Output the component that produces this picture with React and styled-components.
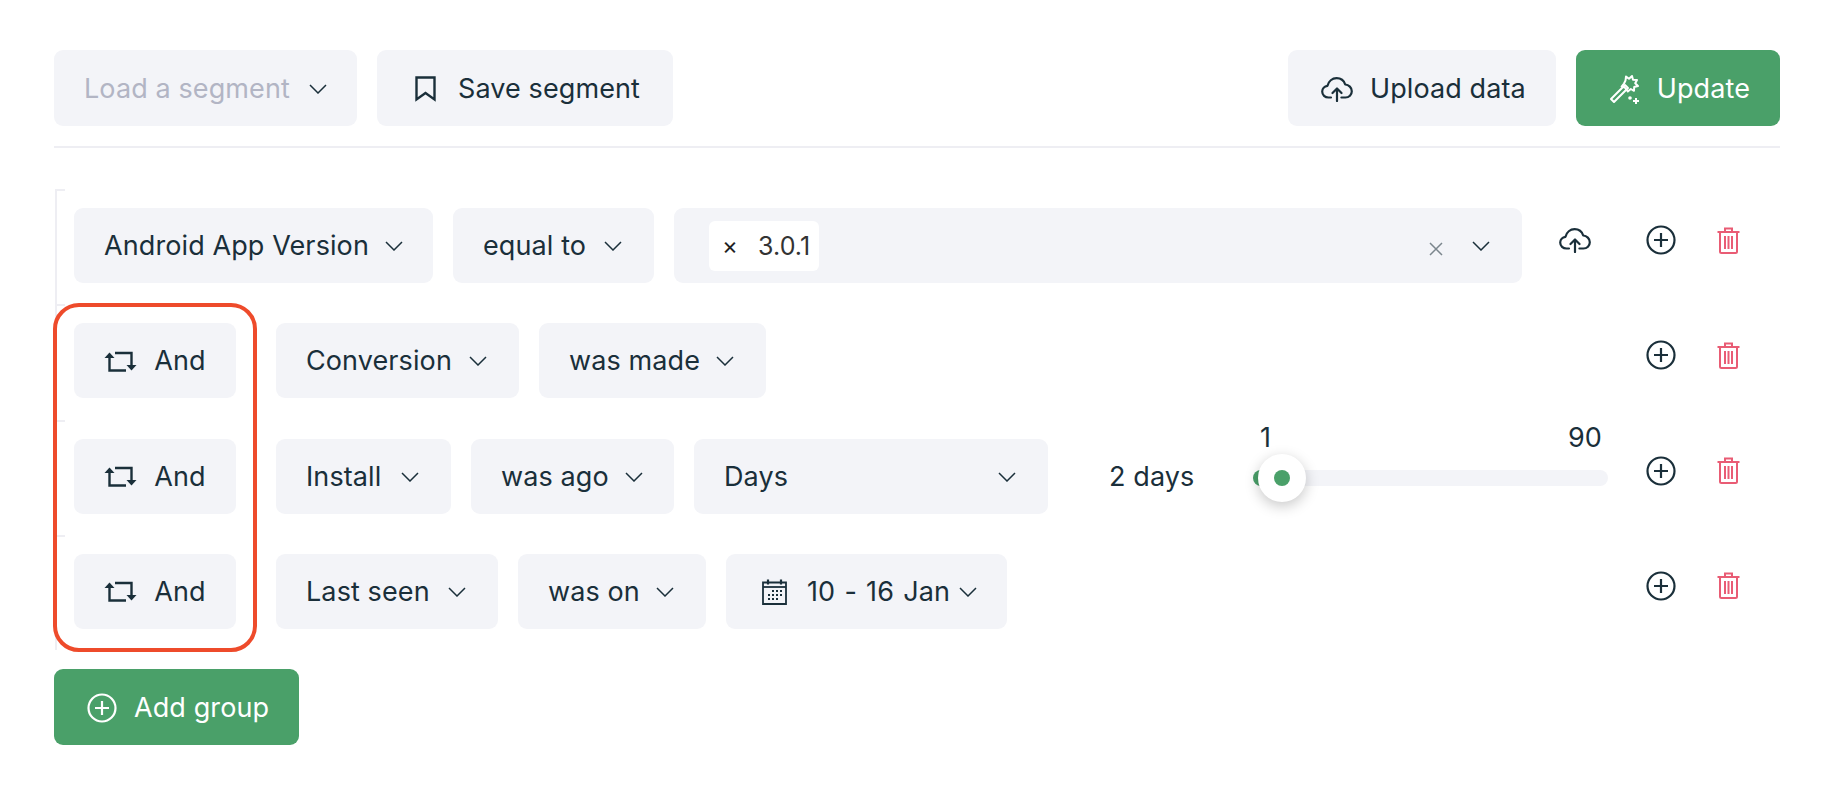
import styled, { createGlobalStyle } from "styled-components";

const ink = "#1a2f3a";
const soft = "#f3f4f8";
const green = "#4aa069";
const pink = "#e95c74";

const GlobalStyle = createGlobalStyle`
    body {
        margin: 0;
        background: #fff;
        font-family: 'Inter', 'Liberation Sans', sans-serif;
        color: ${ink};
    }
`

const Chevron = () => (
    <ChevronSvg viewBox="0 0 18 10" fill="none" stroke={ink} strokeWidth="1.5">
        <path d="M1 1l8 8 8-8" />
    </ChevronSvg>
)

const Bookmark = () => (
    <svg width="21" height="26" viewBox="0 0 21 26" fill="none" stroke="currentColor" strokeWidth="2.4">
        <path d="M1.5 1.5h18v22l-9-6.5-9 6.5z" />
    </svg>
)

const CloudUpload = () => (
    <svg width="32" height="25" viewBox="0 0 32 25" fill="none" stroke="currentColor" strokeWidth="2.2" strokeLinecap="round" strokeLinejoin="round">
        <path d="M10 20.5H7.5C4 20.5 1.2 18 1.2 14.6c0-3 2.3-5.4 5.3-5.8C7.6 4.4 11.2 1.2 15.6 1.2c4 0 7.4 2.6 8.6 6.3 3.6.2 6.6 3.2 6.6 6.7 0 3.5-2.8 6.3-6.4 6.3h-4" />
        <path d="M16 24V12M11.5 16l4.5-4.5 4.500 4.500" />
    </svg>
)

const Wand = () => (
    <svg width="31" height="30" viewBox="0 0 31 30" fill="none" stroke="#fff" strokeWidth="2" strokeLinejoin="round">
        <path d="M2 25l14-14 3 3-14 14z" />
        <path d="M16.500 6.500l.5-4 3 2.200 3-2.700 1 3.800 4 .2-1.800 3.300 2.800 2.700-3.800 1-.2 3.800-3.200-1.800-3 2.500-3-4-3.200-1 2.400-3z" />
        <circle cx="21" cy="24" r="1.800" fill="#fff" stroke="none" />
        <path d="M27 24v6M24 27h6" />
    </svg>
)

const Repost = () => (
    <svg width="33" height="21" viewBox="0 0 33 21" fill="none" stroke="currentColor" strokeWidth="2.400">
        <path d="M5.500 4v15.500H22" />
        <path d="M11 2h16.500v15" />
        <path d="M0.500 7l5-5.500 5 5.500z" fill="currentColor" stroke="none" />
        <path d="M22.500 14l5 5.500 5-5.500z" fill="currentColor" stroke="none" />
    </svg>
)

const CirclePlus = ({ color = ink }) => (
    <svg width="30" height="30" viewBox="0 0 30 30" fill="none" stroke={color} strokeWidth="2.200">
        <circle cx="15" cy="15" r="13.500" />
        <path d="M15 8v14M8 15h14" />
    </svg>
)

const Trash = () => (
    <svg width="23" height="27" viewBox="0 0 23 27" fill="none" stroke={pink} strokeWidth="2">
        <path d="M0.500 5h22" />
        <path d="M8 5V1.500h7V5" />
        <path d="M3 5v19.500a1.500 1.500 0 0 0 1.500 1.500h14a1.500 1.500 0 0 0 1.500-1.500V5" />
        <path d="M8 9v13M11.500 9v13M15 9v13" />
    </svg>
)

const Calendar = () => (
    <svg width="25" height="26" viewBox="0 0 25 26" fill="none" stroke="currentColor" strokeWidth="1.800">
        <path d="M1 3.500h23V25H1z" />
        <path d="M1 8h23" />
        <path d="M6 0.500v5M19 0.500v5" strokeWidth="2.200" />
        <path d="M10 12h2M14 12h2M18 12h2M6 16h2M10 16h2M14 16h2M18 16h2M6 20h2M10 20h2M14 20h2" strokeWidth="2.200" />
    </svg>
)

const Select = ({ label, width }) => (
    <Control $width={width}>
        {label}
        <Chevron />
    </Control>
)

const Actions = () => (
    <RowActions>
        <CirclePlus />
        <Trash />
    </RowActions>
)

const AndButton = () => (
    <Operator>
        <Repost />
        And
    </Operator>
)

const App = () => {
    return (
        <Page>
            <GlobalStyle />
            <Toolbar>
                <ToolGroup>
                    <LoadButton>
                        Load a segment
                        <Chevron />
                    </LoadButton>
                    <SaveButton>
                        <Bookmark />
                        Save segment
                    </SaveButton>
                </ToolGroup>
                <ToolGroup>
                    <ToolButton>
                        <CloudUpload />
                        Upload data
                    </ToolButton>
                    <UpdateButton>
                        <Wand />
                        Update
                    </UpdateButton>
                </ToolGroup>
            </Toolbar>

            <Tree>
                <Row>
                    <Filters>
                        <Select label="Android App Version" width={359} />
                        <Select label="equal to" width={201} />
                        <ValueBox>
                            <Tag>
                                <TagClose>×</TagClose>
                                3.0.1
                            </Tag>
                            <ClearIcon viewBox="0 0 14 14" stroke="#7b868d" strokeWidth="1.500">
                                <path d="M1 1l12 12M13 1L1 13" />
                            </ClearIcon>
                            <Chevron />
                        </ValueBox>
                        <UploadSlot>
                            <CloudUpload />
                        </UploadSlot>
                    </Filters>
                    <Actions />
                </Row>
                <Row>
                    <AndButton />
                    <Filters>
                        <Select label="Conversion" width={243} />
                        <Select label="was made" width={227} />
                    </Filters>
                    <Actions />
                </Row>
                <Row>
                    <AndButton />
                    <Filters>
                        <Select label="Install" width={175} />
                        <Select label="was ago" width={203} />
                        <Select label="Days" width={354} />
                        <DaysValue>2 days</DaysValue>
                        <Slider>
                            <SliderMin>1</SliderMin>
                            <SliderMax>90</SliderMax>
                            <SliderFill />
                            <SliderKnob />
                        </Slider>
                    </Filters>
                    <Actions />
                </Row>
                <Row>
                    <AndButton />
                    <Filters>
                        <Select label="Last seen" width={222} />
                        <Select label="was on" width={188} />
                        <DateControl>
                            <Calendar />
                            <DateText>10 - 16 Jan</DateText>
                            <Chevron />
                        </DateControl>
                    </Filters>
                    <Actions />
                </Row>
            </Tree>

            <AddGroup>
                <CirclePlus color="#fff" />
                Add group
            </AddGroup>

            <Highlight />
        </Page>
    )
}

export default App;


const Page = styled.div`
    position: relative;
    padding: 50px 42px 49px 54px;
    height: 794px;
    box-sizing: border-box;
    overflow: hidden;
    font-size: 27px;
    line-height: 30px;
    letter-spacing: 0.1px;
`
const Toolbar = styled.div`
    display: flex;
    justify-content: space-between;
    padding-bottom: 20px;
    border-bottom: 2px solid #eeeef3;
`
const ToolGroup = styled.div`
    display: flex;
    gap: 20px;
`
const ToolButton = styled.div`
    display: flex;
    align-items: center;
    gap: 17px;
    box-sizing: border-box;
    height: 76px;
    padding: 2px 30px 0 33px;
    border-radius: 9px;
    background: ${soft};
    white-space: nowrap;
`
const LoadButton = styled(ToolButton)`
    justify-content: space-between;
    width: 303px;
    padding: 2px 30px 0;
    color: #b2b5c4;
`
const SaveButton = styled(ToolButton)`
    width: 296px;
    padding: 2px 0 0 38px;
    gap: 22px;
`
const UpdateButton = styled(ToolButton)`
    background: ${green};
    color: #fff;
`
const Tree = styled.div`
    margin-top: 41px;
    margin-bottom: 19px;
`
const Row = styled.div`
    position: relative;
    display: flex;
    align-items: flex-start;
    padding: 19px 40px 21.33px 17px;
    border-left: 2px solid #eeeef3;
    margin-left: 1px;

    &::before {
        content: "";
        position: absolute;
        left: 0;
        top: 0;
        width: 8px;
        height: 2px;
        background: #eeeef3;
    }
`
const Filters = styled.div`
    display: flex;
    flex: 1;
    gap: 20px;
    min-width: 0;
`
const Control = styled.div`
    display: flex;
    align-items: center;
    justify-content: space-between;
    flex: none;
    gap: 16px;
    box-sizing: border-box;
    width: ${(p) => (p.$width ? `${p.$width}px` : "auto")};
    height: 75px;
    padding: 1px 32px 0 30px;
    border-radius: 9px;
    background: ${soft};
    white-space: nowrap;
`
const ChevronSvg = styled.svg`
    width: 18px;
    height: 10px;
    flex: none;
`
const Operator = styled(Control)`
    width: 162px;
    justify-content: center;
    gap: 17px;
    padding: 1px 0 0;
    margin-right: 40px;
`
const ValueBox = styled(Control)`
    flex: 1;
    justify-content: flex-start;
    padding: 0 32px 0 35px;
`
const Tag = styled.div`
    display: flex;
    align-items: center;
    height: 50px;
    padding: 0 9px 0 13px;
    margin-right: auto;
    border-radius: 6px;
    background: #fff;
    color: #333;
    font-size: 25px;
`
const TagClose = styled.span`
    margin-right: 20px;
    font-size: 24px;
    color: #222;
`
const ClearIcon = styled.svg`
    width: 14px;
    height: 14px;
    margin: 6px 13px 0 0;
`
const UploadSlot = styled.div`
    display: flex;
    margin: 20px 17px 0;
`
const RowActions = styled.div`
    display: flex;
    align-items: center;
    gap: 41px;
    padding-top: 17px;
    margin-left: 38px;
`
const DaysValue = styled.div`
    display: flex;
    align-items: center;
    box-sizing: border-box;
    width: 82px;
    height: 75px;
    padding-top: 1px;
    margin-left: 41px;
    white-space: nowrap;
`
const Slider = styled.div`
    position: relative;
    flex: 1;
    height: 16px;
    margin: 31px 0 0 42px;
    border-radius: 8px;
    background: ${soft};
`
const SliderMin = styled.span`
    position: absolute;
    left: 7px;
    top: -47px;
`
const SliderMax = styled.span`
    position: absolute;
    right: 6px;
    top: -47px;
`
const SliderFill = styled.div`
    position: absolute;
    left: 0;
    top: 0;
    width: 30px;
    height: 16px;
    border-radius: 8px;
    background: ${green};
`
const SliderKnob = styled.div`
    position: absolute;
    left: 5px;
    top: -16px;
    width: 48px;
    height: 48px;
    border-radius: 50%;
    background: #fff;
    box-shadow: 0 4px 14px rgba(0, 0, 0, 0.22);

    &::after {
        content: "";
        position: absolute;
        left: 16px;
        top: 16px;
        width: 16px;
        height: 16px;
        border-radius: 50%;
        background: ${green};
    }
`
const DateControl = styled(Control)`
    justify-content: flex-start;
    width: 281px;
    padding: 1px 0 0 36px;
    gap: 9px;
`
const DateText = styled.span`
    margin-left: 11px;
    word-spacing: 1.5px;
`
const AddGroup = styled.div`
    display: inline-flex;
    align-items: center;
    gap: 17px;
    box-sizing: border-box;
    width: 245px;
    height: 76px;
    padding: 1px 0 0 33px;
    border-radius: 9px;
    background: ${green};
    color: #fff;
`
const Highlight = styled.div`
    position: absolute;
    left: 53px;
    top: 303px;
    width: 204px;
    height: 349px;
    box-sizing: border-box;
    border: 4px solid #ee4b2b;
    border-radius: 26px;
    pointer-events: none;
`
